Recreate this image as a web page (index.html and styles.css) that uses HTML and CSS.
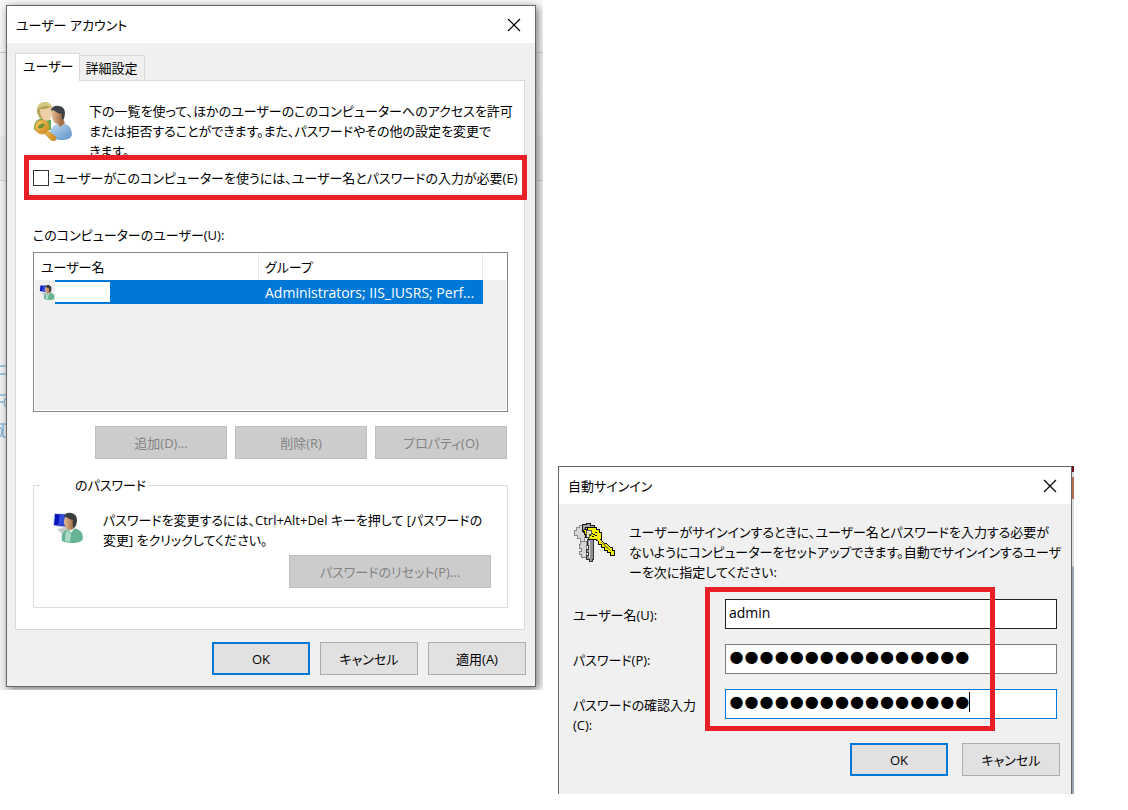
FILE: index.html
```html
<!DOCTYPE html>
<html lang="ja">
<head>
    <meta charset="UTF-8">
    <meta name="viewport" content="width=device-width, initial-scale=1.0">
    <title>ユーザー アカウント</title>
    <link rel="stylesheet" href="styles.css">
</head>
<body>
    <main class="desktop">
        <section class="backdrop accounts-backdrop">
            <svg class="page-scraps" width="6" height="76" viewBox="0 0 6 76" aria-hidden="true">
                <path d="M0 1h6M0 9h6M0 30h6M0 37h3M6 33Q2 37 6 42M0 59h6M0 62Q4 66 0 72M3 60v12h3" fill="none" stroke="#4a97cc"/>
            </svg>
            <div class="window accounts">
                <header class="titlebar">
                    <h1>ユーザー アカウント</h1>
                    <button class="close" aria-label="閉じる">
                        <svg width="14" height="14" viewBox="0 0 14 14"><path d="M1 1l12 12M13 1L1 13" stroke="#000" stroke-width="1.2"/></svg>
                    </button>
                </header>
                <nav class="tabs">
                    <button class="tab active">ユーザー</button>
                    <button class="tab">詳細設定</button>
                </nav>
                <div class="panel">
                    <div class="intro">
                        <svg width="40" height="40" viewBox="0 0 40 40" aria-hidden="true">
                            <defs>
                                <linearGradient id="skin" x1="0" x2="1"><stop offset="0" stop-color="#e5bd92"/><stop offset="1" stop-color="#8c5635"/></linearGradient>
                                <linearGradient id="blue" x1="0" x2="1" y2="1"><stop offset="0" stop-color="#c5dcf2"/><stop offset="1" stop-color="#5b92c8"/></linearGradient>
                                <linearGradient id="gold" x1="0" x2="1" y2="1"><stop offset="0" stop-color="#f6cf68"/><stop offset="1" stop-color="#c9811b"/></linearGradient>
                            </defs>
                            <path d="M1 27q0-9 9-10l8 2v10l-14 1q-3 0-3-3z" fill="#64a747"/>
                            <ellipse cx="12" cy="10" rx="8" ry="9" fill="#b3a557"/>
                            <path d="M7 8q5 1 10-2 2 2 2 7-1 7-6 7-6-2-6-12z" fill="#edcfaa"/>
                            <path d="M4 8Q5 1 12 1q7 1 8 7-4-4-8-3-4 1-8 3z" fill="#d2c984"/>
                            <path d="M17 37q-1-10 5-13l5-2q11 0 12 11 0 5-8 6-9 0-14-2z" fill="url(#blue)"/>
                            <path d="M24 21l3 5 5-4-2-4z" fill="#a87046"/>
                            <ellipse cx="25" cy="15" rx="6" ry="8" fill="url(#skin)"/>
                            <path d="M18 10q1-6 8-5 6 1 6 7 0 4-2 7-2-2-1-6-5-1-9-4z" fill="#3d4147"/>
                            <path d="M11 27l12 9-1 4-4-1-9-9z" fill="url(#gold)" stroke="#c8892c" stroke-width=".7"/>
                            <circle cx="9" cy="26" r="7" fill="url(#gold)" stroke="#d79b37" stroke-width=".7"/>
                            <path d="M5 27q1-5 7-4-1 5-7 4z" fill="#6b8e30"/>
                        </svg>
                        <p>下の一覧を使って、ほかのユーザーのこのコンピューターへのアクセスを許可<br>または拒否することができます。また、パスワードやその他の設定を変更で<br>きます。</p>
                    </div>
                    <div class="require">
                        <input type="checkbox" id="require-password">
                        <label for="require-password">ユーザーがこのコンピューターを使うには、ユーザー名とパスワードの入力が必要(E)</label>
                    </div>
                    <h2 class="list-label">このコンピューターのユーザー(U):</h2>
                    <div class="user-list">
                        <table>
                            <thead>
                                <tr><th>ユーザー名</th><th>グループ</th></tr>
                            </thead>
                            <tbody>
                                <tr>
                                    <td>
                                        <div class="user-name">
                                            <svg width="16" height="18" viewBox="0 0 32 34" aria-hidden="true"><use href="#user-pc"/></svg>
                                            <span class="blank"></span>
                                        </div>
                                    </td>
                                    <td>Administrators; IIS_IUSRS; Perf...</td>
                                </tr>
                            </tbody>
                        </table>
                    </div>
                    <div class="list-buttons">
                        <button disabled>追加(D)...</button>
                        <button disabled>削除(R)</button>
                        <button disabled>プロパティ(O)</button>
                    </div>
                    <fieldset class="password-group">
                        <legend>のパスワード</legend>
                        <div class="password-text">
                            <svg width="32" height="34" viewBox="0 0 32 34" aria-hidden="true">
                                <g id="user-pc">
                                    <path d="M5 19l11-2 3 5-9 2z" fill="#c5c9cc"/>
                                    <path d="M2 3l17 1-1 15L1 16z" fill="#c9d5e5"/>
                                    <path d="M3 4l15 1-1 12L2 15z" fill="#0712bd"/>
                                    <path d="M8 4l7 1-3 11-6-1z" fill="#334bdb"/>
                                    <path d="M10 31q-2-9 6-12l6-1q9 2 9 10 0 4-8 5-9 0-13-2z" fill="#66b494"/>
                                    <path d="M15 20l4 4-1 8-5-1q0-7 2-11z" fill="#a9dbc5"/>
                                    <path d="M15 18l4 5 4-5z" fill="#e6eee9"/>
                                    <ellipse cx="18" cy="12" rx="6" ry="8" fill="url(#skin)"/>
                                    <path d="M12 6q2-4 7-3 6 1 6 7 0 5-3 8-2-3-1-8-4-1-9-4z" fill="#3b3c3e"/>
                                </g>
                            </svg>
                            <p>パスワードを変更するには、Ctrl+Alt+Del キーを押して [パスワードの<br>変更] をクリックしてください。</p>
                        </div>
                        <button class="reset" disabled>パスワードのリセット(P)...</button>
                    </fieldset>
                </div>
                <footer class="actions">
                    <button class="default">OK</button>
                    <button>キャンセル</button>
                    <button>適用(A)</button>
                </footer>
            </div>
        </section>

        <section class="backdrop signin-backdrop">
            <div class="window signin">
                <header class="titlebar">
                    <h1>自動サインイン</h1>
                    <button class="close" aria-label="閉じる">
                        <svg width="14" height="14" viewBox="0 0 14 14"><path d="M1 1l12 12M13 1L1 13" stroke="#000" stroke-width="1.2"/></svg>
                    </button>
                </header>
                <div class="signin-intro">
                    <svg width="42" height="42" viewBox="0 0 42 42" aria-hidden="true" shape-rendering="crispEdges">
                        <path d="M3 5h3V3h8v12h-3v5H7v-4H4v-3H1V8h2z" fill="#d6d6d6" stroke="#8d8d8d"/>
                        <path d="M7 19h6v16H8v-3H6v-3h2v-3H6v-4h1z" fill="#d6d6d6" stroke="#858585"/>
                        <path d="M14 17h6v20h-1v2h-3v-2h-3v-4h2v-3h-2v-3h2v-4h-1z" fill="#929292" stroke="#333"/>
                        <path d="M16 19v17" stroke="#e0e0e0"/>
                        <path d="M9 7V2h4V1h4v2h4v4h-2V5h-7v5h-2z" fill="#a5a5a5" stroke="#111"/>
                        <path d="M12 7h2V5h9v2h3v3h2v7h-1l4 4h2l4 4h2v3h2v5h-4v-3h-3v-2h-3v-3h-3v-3h-3v-3l-3-2h-7v-2h-3v-3h-1v-3h-1z" fill="#f3ef00" stroke="#111"/>
                        <path d="M18 11h2v1h-2zM22 10h2v1h-2zM20 12h2v1h-2zM22 13h2v1h-2zM19 14h2v1h-2zM17 13h1v1h-1z" fill="#111"/>
                        <path d="M13 8h5v4h-2v3h-2z" fill="#e9e9bf" stroke="#555"/>
                        <path d="M28 20l10 9" stroke="#8d8a00"/>
                    </svg>
                    <p>ユーザーがサインインするときに、ユーザー名とパスワードを入力する必要が<br>ないようにコンピューターをセットアップできます。自動でサインインするユーザ<br>ーを次に指定してください:</p>
                </div>
                <form class="signin-form">
                    <label for="user">ユーザー名(U):</label>
                    <div class="field"><input type="text" id="user" value="admin"></div>
                    <label for="password">パスワード(P):</label>
                    <div class="field"><input type="password" id="password" value="0123456789abcdef"></div>
                    <label for="confirm">パスワードの確認入力<br>(C):</label>
                    <div class="field focused"><input type="password" id="confirm" value="0123456789abcdef"></div>
                </form>
                <footer class="actions">
                    <button class="default">OK</button>
                    <button>キャンセル</button>
                </footer>
            </div>
        </section>
    </main>
</body>
</html>
```

FILE: styles.css
```css
* {
    box-sizing: border-box;
}
body {
    margin: 0;
    background-color: #fff;
    color: #000;
    font-family: "Open Sans", "Noto Sans CJK JP", sans-serif;
    font-size: 13px;
    line-height: 20px;
    font-feature-settings: "palt";
}
h1, h2, p {
    margin: 0;
    font-size: 13px;
    font-weight: normal;
}
p, label, h1, h2 {
    white-space: nowrap;
}
button, input {
    font: inherit;
    font-feature-settings: inherit;
    color: inherit;
}
svg {
    display: block;
    flex: none;
}
.desktop {
    display: flex;
    align-items: flex-start;
    gap: 15px;
    padding-right: 54px;
}

/* what shows behind each window */
.backdrop {
    position: relative;
    min-width: 0;
    overflow: hidden;
}
.accounts-backdrop {
    flex: 530 1 0;
    padding: 5px 7px 3px 6px;
    background: linear-gradient(#ccc, #ccc) 0 52px / 100% 1px no-repeat,
        linear-gradient(#ccc, #ccc) 0 180px / 100% 1px no-repeat,
        linear-gradient(#f8f8f8 0, #f1f1f1 136px, #e9e9eb 136px, #e9e9eb 180px, #f2f2f2 181px);
}
.signin-backdrop {
    flex: 514 1 0;
    margin-top: 466px;
    padding-right: 2px;
    background: linear-gradient(#70101c 0 6px, #ddd 6px 11px, #ad7150 11px 33px, #ddd 33px 100px, #9ca3af 101px);
}
.page-scraps {
    position: absolute;
    left: 0;
    top: 365px;
}

.window {
    position: relative;
    background-color: #f0f0f0;
    border: 1px solid #666;
}
.accounts {
    padding-bottom: 11px;
    box-shadow: 2px 2px 8px #777;
}
.signin {
    border-bottom: none;
    padding-bottom: 18px;
}
.titlebar {
    display: flex;
    justify-content: space-between;
    align-items: center;
    height: 37px;
    padding: 0 14px 0 9px;
    background-color: #fff;
}
.close {
    padding: 0;
    border: none;
    background: none;
}

.tabs {
    display: flex;
    align-items: flex-end;
    height: 38px;
    margin-left: 8px;
}
.tab {
    position: relative;
    height: 26px;
    padding: 0 6px;
    border: 1px solid #d9d9d9;
    border-left: none;
    background-color: #f0f0f0;
    white-space: nowrap;
}
.tab.active {
    z-index: 1;
    height: 28px;
    padding: 0 5px 3px 7px;
    border-left: 1px solid #d9d9d9;
    border-bottom: none;
    background-color: #fff;
}
.panel {
    margin: -1px 10px 0 8px;
    padding: 20px 16px 21px 17px;
    border: 1px solid #d9d9d9;
    background-color: #fff;
}
.intro {
    display: flex;
    gap: 16px;
    height: 55px;
}

.require {
    position: relative;
    display: flex;
    align-items: center;
    gap: 4px;
    height: 43px;
}
/* red marker frame */
.require::after,
.signin-form::after {
    content: "";
    position: absolute;
    border: 5px solid #e81f27;
    pointer-events: none;
}
.require::after {
    inset: -1px -19px -1px -9px;
}
.require input {
    flex: none;
    appearance: none;
    width: 16px;
    height: 16px;
    margin: 0;
    border: 1px solid #333;
    background-color: #fff;
}

.list-label {
    margin: 26px 0 7px;
}
.user-list {
    height: 160px;
    padding: 1px;
    border: 1px solid #828790;
    background-color: #f0f0f0;
    box-shadow: inset 0 0 0 1px #fff;
}
.user-list table {
    width: 100%;
    border-collapse: collapse;
    background: linear-gradient(#fff, #fff) 0 0 / 100% 26px no-repeat;
}
.user-list th,
.user-list td {
    height: 26px;
    padding: 0 6px;
    text-align: left;
    font-weight: normal;
    white-space: nowrap;
}
.user-list thead tr,
.user-list tbody tr {
    display: grid;
    grid-template-columns: 1fr 1fr;
    margin-right: 23px;
}
.user-list th {
    border-right: 1px solid #e5e5e5;
    line-height: 26px;
}
.user-list td {
    height: 24px;
    font-size: 14px;
    line-height: 25px;
    background-color: #0078d7;
    color: #fff;
}
.user-list td:first-child {
    padding: 0;
    background: linear-gradient(90deg, #f0f0f0 20px, #0078d7 20px);
}
.user-name {
    display: flex;
    align-items: center;
    height: 24px;
    padding-left: 4px;
}
.blank {
    width: 55px;
    height: 20px;
    background-color: #fff;
}

.list-buttons,
.actions {
    display: flex;
    justify-content: flex-end;
}
.list-buttons {
    gap: 8px;
    margin: 14px 1px 16px;
}
.list-buttons button,
.reset,
.actions button {
    height: 33px;
    padding: 0;
    border: 1px solid #adadad;
    background-color: #e1e1e1;
}
.list-buttons button {
    width: 132px;
}
.actions button {
    width: 98px;
}
.list-buttons button:disabled,
.reset:disabled {
    border-color: #bfbfbf;
    background-color: #ccc;
    color: #838383;
}
.actions .default {
    border: 2px solid #0078d7;
}

.password-group {
    min-width: 0;
    margin: 0;
    padding: 15px 16px 19px 18px;
    border: 1px solid #dcdcdc;
}
.password-group legend {
    margin-left: -12px;
    padding: 0 2px 0 35px;
}
.password-text {
    display: flex;
    gap: 19px;
}
.reset {
    display: block;
    width: 202px;
    margin: 5px 0 0 auto;
}
.accounts .actions {
    gap: 10px;
    margin: 12px 9px 0 0;
}

.signin-intro {
    display: flex;
    gap: 14px;
    padding: 18px 0 0 14px;
}
.signin-form {
    position: relative;
    display: grid;
    grid-template-columns: 152px 1fr;
    row-gap: 15px;
    padding: 17px 14px 0 14px;
}
.signin-form::after {
    left: 146px;
    right: 76px;
    top: 5px;
    bottom: -1px;
}
.signin-form label {
    padding-top: 6px;
    margin-bottom: -6px;
}
.signin-form label:last-of-type {
    margin-bottom: -5px;
}
.field {
    position: relative;
    height: 30px;
}
.field input {
    display: block;
    width: 100%;
    height: 30px;
    padding: 0 3px 3px;
    border: 1px solid #7a7a7a;
    background-color: #fff;
    outline: none;
}
.field input[type="text"] {
    border-color: #222;
    font-size: 14px;
}
.field input[type="password"] {
    font-family: "Liberation Sans", sans-serif;
    font-size: 43px;
    font-weight: bold;
    line-height: 26px;
}
.field.focused input {
    border-color: #0078d7;
}
/* text caret */
.field.focused::after {
    content: "";
    position: absolute;
    left: 244px;
    top: 3px;
    width: 1px;
    height: 20px;
    background-color: #000;
}
.signin .actions {
    gap: 14px;
    margin: 13px 11px 0 0;
}
```
